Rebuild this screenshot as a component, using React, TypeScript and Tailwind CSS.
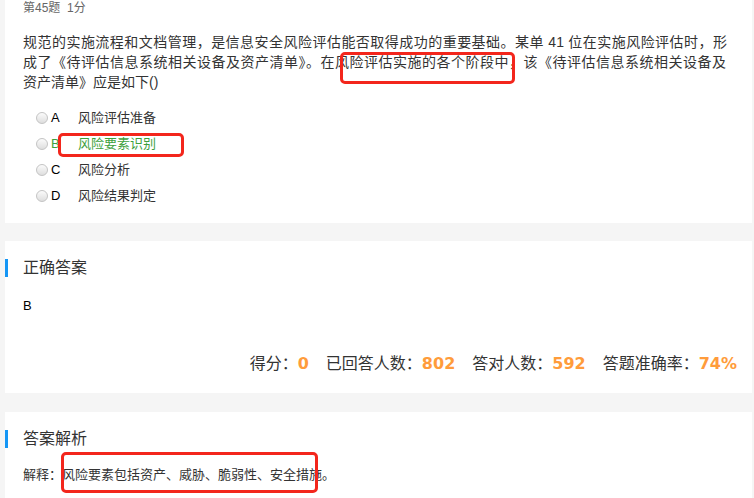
const font = { fontFamily: '"Liberation Sans", "Noto Sans CJK SC", sans-serif' };

const options = [
  { key: "A", text: "风险评估准备" },
  { key: "B", text: "风险要素识别", correct: true },
  { key: "C", text: "风险分析" },
  { key: "D", text: "风险结果判定" },
];

const Radio = () => (
  <span className="inline-block w-[12px] h-[12px] rounded-full border border-[#c4c4c4] bg-gradient-to-b from-[#fbfbfb] to-[#dedede]" />
);

const SectionTitle = ({ children }: { children: React.ReactNode }) => (
  <div className="flex items-center h-[18px]">
    <span className="w-[3px] h-[18px] bg-[#1596f5]" />
    <span className="ml-[15px] text-[16px] leading-[18px] text-[#333]">{children}</span>
  </div>
);

const Stat = ({ label, value }: { label: string; value: string }) => (
  <span className="flex items-center">
    <span className="text-[16px] text-[#333]">{label}</span>
    <span className="text-[16px] font-bold text-[#ff9c3b] font-['DejaVu_Sans',sans-serif]">{value}</span>
  </span>
);

export default function App() {
  return (
    <div lang="zh-CN" className="relative w-[754px] h-[498px] overflow-hidden bg-[#f5f5f5] pl-[5px] pr-[2px]" style={font}>
      {/* 题目 */}
      <div className="bg-white pl-[18px] pr-[25px] pb-[14px]">
        <div className="text-[12px] leading-[17px] text-[#666]">第45题&nbsp;&nbsp;1分</div>
        <div className="mt-[15px] text-[14px] leading-[20px] text-[#333]">
          <div className="text-justify [text-align-last:justify]">
            规范的实施流程和文档管理，是信息安全风险评估能否取得成功的重要基础。某单 41 位在实施风险评估时，形
          </div>
          <div className="tracking-[0.5px] whitespace-nowrap">
            成了《待评估信息系统相关设备及资产清单》。在风险评估实施的各个阶段中，该《待评估信息系统相关设备及
          </div>
          <div>资产清单》应是如下()</div>
        </div>
        <ul className="mt-[13px]">
          {options.map((o) => (
            <li key={o.key} className="flex items-center h-[26px] text-[13px]">
              <span className="ml-[13px] mr-[3px] flex items-center">
                <Radio />
              </span>
              <span className={`w-[27px] ${o.correct ? "text-[#3d9f3d]" : "text-black"}`}>{o.key}</span>
              <span className={o.correct ? "text-[#3d9f3d]" : "text-[#333]"}>{o.text}</span>
            </li>
          ))}
        </ul>
      </div>

      {/* 正确答案 */}
      <div className="mt-[18px] bg-white h-[152px] pt-[18px] flex flex-col">
        <SectionTitle>正确答案</SectionTitle>
        <div className="mt-[20px] pl-[18px] text-[13px] leading-[18px] text-black">B</div>
        <div className="mt-auto mb-[18px] flex justify-end gap-[17px] pr-[15px] leading-[22px]">
          <Stat label="得分：" value="0" />
          <Stat label="已回答人数：" value="802" />
          <Stat label="答对人数：" value="592" />
          <Stat label="答题准确率：" value="74%" />
        </div>
      </div>

      {/* 答案解析 */}
      <div className="mt-[19px] bg-white h-[120px] pt-[18px]">
        <SectionTitle>答案解析</SectionTitle>
        <div className="mt-[18px] pl-[18px] text-[13px] leading-[18px] text-[#333]">
          解释：风险要素包括资产、威胁、脆弱性、安全措施。
        </div>
      </div>

      {/* 标注框 */}
      <div className="absolute left-[340px] top-[52px] w-[175px] h-[32px] border-[3px] border-[#f3261c] rounded-[5px]" />
      <div className="absolute left-[58px] top-[133px] w-[126px] h-[24px] border-[3px] border-[#f3261c] rounded-[5px]" />
      <div className="absolute left-[61px] top-[452px] w-[257px] h-[41px] border-[3px] border-[#f3261c] rounded-[5px]" />
    </div>
  );
}
